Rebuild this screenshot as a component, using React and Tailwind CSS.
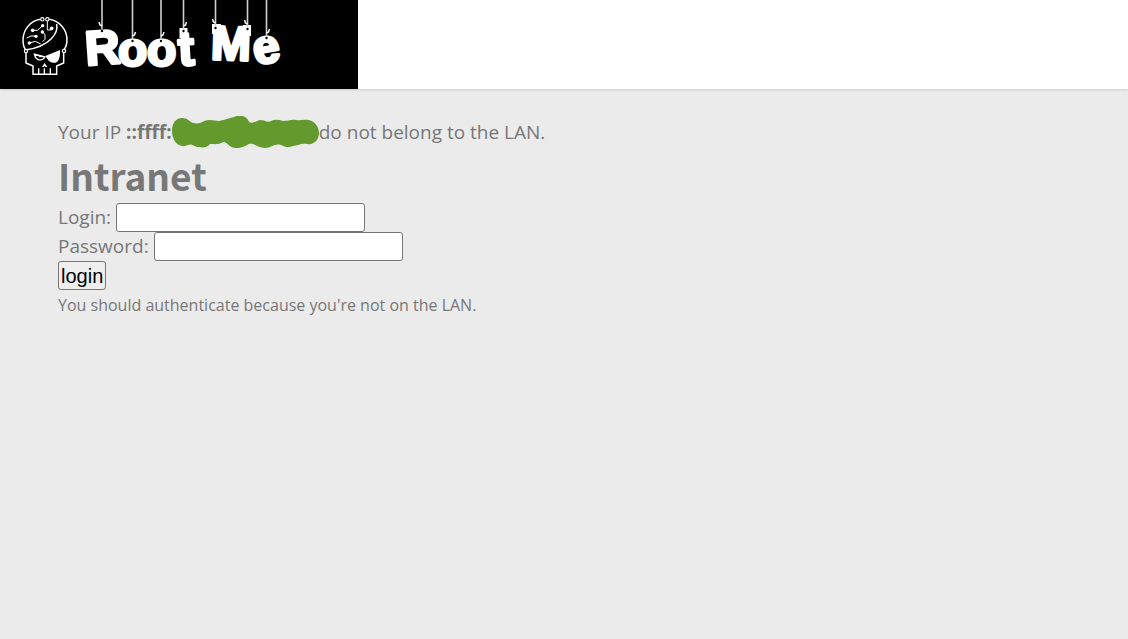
const strings = [
  { x: 102, y: 30, side: -1 },
  { x: 132.5, y: 40, side: 1 },
  { x: 161, y: 40, side: 1 },
  { x: 183.5, y: 30, side: 1 },
  { x: 215.5, y: 27, side: -1 },
  { x: 247.5, y: 28, side: -1 },
  { x: 266.5, y: 37, side: 1 },
];

function Skull() {
  return (
    <g
      transform="translate(10 5) scale(0.33333)"
      fill="none"
      stroke="#fff"
      strokeWidth="4.5"
      strokeLinejoin="round"
    >
      <path d="M91 43C60 48 40 74 39 104C39 116 41 126 46 133M118 43C149 48 170 73 171 103C171 117 168 127 162 134" />
      <path d="M48 143V174L69 183V208H140V183L161 174V143" />
      <path d="M49 134C80 130 106 119 124 101C138 87 143 72 140 57" />
      <path d="M86 207V190M103 207V190M121 207V190" strokeWidth="4" />
      <circle cx="97" cy="43" r="5" strokeWidth="3.5" />
      <circle cx="112" cy="43" r="5" strokeWidth="3.5" />
      <circle cx="48" cy="138" r="5" strokeWidth="3.5" />
      <circle cx="162" cy="138" r="5" strokeWidth="3.5" />
      <path d="M112 48V75H124V70M98 62L89 70L82 76H68M97 81L105 88V103L98 110M78 93H63L50 99M58 114L76 109L92 117" strokeWidth="3" />
      <g fill="#fff" stroke="none">
        <circle cx="98" cy="62" r="5" />
        <circle cx="68" cy="76" r="5.5" />
        <circle cx="97" cy="81" r="5" />
        <circle cx="125" cy="70" r="5.5" />
        <circle cx="78" cy="94" r="5" />
        <circle cx="58" cy="114" r="5" />
        <path d="M106 153L150 135C151 150 149 163 142 170C132 177 118 173 113 163Z" />
        <path d="M104 174L96 186H101L104 183L107 186H112Z" />
      </g>
      <path d="M71 147L105 156C101 164 91 167 83 163C77 160 74 154 74 148" strokeWidth="4" />
      <path d="M86 155H95" strokeWidth="3" />
    </g>
  );
}

function Logo() {
  return (
    <svg className="block h-[89px] w-[358px] bg-black" viewBox="0 0 358 89" role="img" aria-label="Root Me">
      <Skull />
      <g
        fill="#fff"
        stroke="#fff"
        strokeWidth="3"
        strokeLinejoin="round"
        className="font-['Liberation_Sans',Arial,sans-serif] text-[48px] font-bold"
      >
        <text x="85" y="64" transform="rotate(-4 102 47)">R</text>
        <text x="118" y="66">o</text>
        <text x="147" y="66">o</text>
        <text x="178" y="65" transform="rotate(-3 186 47)">t</text>
        <text x="211" y="60" transform="rotate(2 231 43)">M</text>
        <text x="253" y="63" transform="rotate(-10 266 50)">e</text>
      </g>
      <path d="M179.5 28H187.5V38H179.5ZM212 24H221V34H212ZM243 25H251V36H243Z" fill="#fff" />
      {strings.map((s) => (
        <g key={s.x}>
          <path d={`M${s.x} 0V${s.y - 1}`} stroke="#d0d0d0" strokeWidth="1.6" />
          <path
            d={`M${s.x} ${s.y - 4}l${s.side * 2} -1l${s.side} -3`}
            stroke="#fff"
            strokeWidth="1.5"
            fill="none"
          />
          <circle cx={s.x} cy={s.y + 1} r="1.2" fill="#000" />
        </g>
      ))}
    </svg>
  );
}

function Redaction() {
  return (
    <svg className="-mt-2.5 -mb-1.5 inline-block h-8 w-[147px] align-middle" viewBox="0 0 147 32" aria-hidden="true">
      <path
        d="M0 15C0 7 4 2 10 2C15 2 17 5 21 7C26 8 29 7 32 5C38 3 43 5 47 5C53 4 57 2 62 1C68-2 75 0 77 6C81 8 84 5 88 4C93 4 95 7 99 5C103 3 107 4 111 5C116 5 120 3 124 4C128 5 132 3 136 4C143 5 147 11 147 17C147 24 142 29 135 28C129 27 126 30 121 30C116 32 113 31 109 29C102 27 100 32 93 32C86 32 83 27 77 28C73 30 70 32 64 32C57 32 55 25 51 26C47 29 42 28 38 28C36 31 32 32 27 31C22 31 20 27 16 29C8 33 0 26 0 15Z"
        fill="#64992d"
      />
    </svg>
  );
}

const field = "h-[29px] w-[249px] rounded-[3px] border border-[#767676] bg-white px-1 text-xl text-black";

export default function App() {
  return (
    <div className="min-h-screen bg-[#ebebeb] font-['Open_Sans','Noto_Sans_CJK_KR',sans-serif] text-[19px] leading-[29px] text-[#777]">
      <header className="bg-white shadow-[0_1px_2px_rgba(0,0,0,0.12)]">
        <Logo />
      </header>
      <main className="px-[58px] pt-[29px]">
        <p className="whitespace-nowrap">
          Your IP <b>::ffff:</b>
          <Redaction />
          do not belong to the LAN.
        </p>
        <h1 className="py-2 font-['Noto_Sans_CJK_KR',sans-serif] text-[37px] leading-10 font-bold">Intranet</h1>
        <form onSubmit={(e) => e.preventDefault()}>
          <div className="flex items-center gap-[5px]">
            <label htmlFor="login">Login:</label>
            <input id="login" name="login" type="text" className={field} />
          </div>
          <div className="flex items-center gap-[5px]">
            <label htmlFor="password">Password:</label>
            <input id="password" name="password" type="password" className={field} />
          </div>
          <button
            type="submit"
            className="block h-[29px] rounded-[3px] border border-[#767676] bg-[#efefef] px-0.5 font-['Liberation_Sans',Arial,sans-serif] text-xl leading-6 text-black"
          >
            login
          </button>
        </form>
        <p className="text-base leading-[30px]">You should authenticate because you're not on the LAN.</p>
      </main>
    </div>
  );
}
